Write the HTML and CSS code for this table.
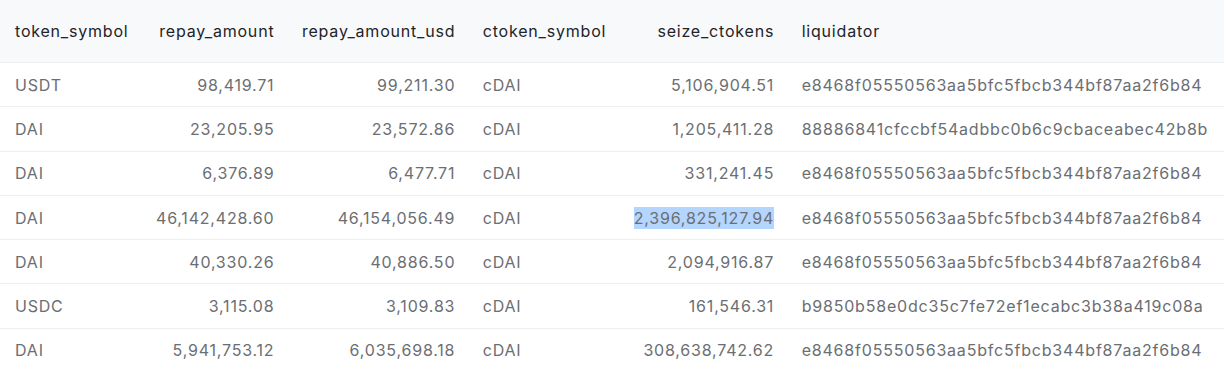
FILE: index.html
```html
<!DOCTYPE html>
<html>
<head>
<meta charset="utf-8">
<link rel="stylesheet" href="styles.css">
</head>
<body>
<table class="grid">
  <thead>
    <tr>
      <th class="l">token_symbol</th>
      <th class="r">repay_amount</th>
      <th class="r">repay_amount_usd</th>
      <th class="l">ctoken_symbol</th>
      <th class="r">seize_ctokens</th>
      <th class="l last">liquidator</th>
    </tr>
  </thead>
  <tbody>
    <tr><td class="l">USDT</td><td class="r">98,419.71</td><td class="r">99,211.30</td><td class="l">cDAI</td><td class="r">5,106,904.51</td><td class="l">e8468f05550563aa5bfc5fbcb344bf87aa2f6b84</td></tr>
    <tr><td class="l">DAI</td><td class="r">23,205.95</td><td class="r">23,572.86</td><td class="l">cDAI</td><td class="r">1,205,411.28</td><td class="l">88886841cfccbf54adbbc0b6c9cbaceabec42b8b</td></tr>
    <tr><td class="l">DAI</td><td class="r">6,376.89</td><td class="r">6,477.71</td><td class="l">cDAI</td><td class="r">331,241.45</td><td class="l">e8468f05550563aa5bfc5fbcb344bf87aa2f6b84</td></tr>
    <tr><td class="l">DAI</td><td class="r">46,142,428.60</td><td class="r">46,154,056.49</td><td class="l">cDAI</td><td class="r"><span class="sel">2,396,825,127.94</span></td><td class="l">e8468f05550563aa5bfc5fbcb344bf87aa2f6b84</td></tr>
    <tr><td class="l">DAI</td><td class="r">40,330.26</td><td class="r">40,886.50</td><td class="l">cDAI</td><td class="r">2,094,916.87</td><td class="l">e8468f05550563aa5bfc5fbcb344bf87aa2f6b84</td></tr>
    <tr><td class="l">USDC</td><td class="r">3,115.08</td><td class="r">3,109.83</td><td class="l">cDAI</td><td class="r">161,546.31</td><td class="l">b9850b58e0dc35c7fe72ef1ecabc3b38a419c08a</td></tr>
    <tr><td class="l">DAI</td><td class="r">5,941,753.12</td><td class="r">6,035,698.18</td><td class="l">cDAI</td><td class="r">308,638,742.62</td><td class="l">e8468f05550563aa5bfc5fbcb344bf87aa2f6b84</td></tr>
  </tbody>
</table>
</body>
</html>
```

FILE: styles.css
```css
html, body {
  margin: 0;
  padding: 0;
  background: #ffffff;
}
body {
  font-family: Inter, "Noto Sans", sans-serif;
  font-size: 16px;
  letter-spacing: 0.8px;
}
.grid {
  width: 100%;
  border-collapse: collapse;
}
.grid th {
  background: #f8f9fb;
  color: #222428;
  font-weight: 400;
  height: 62px;
  padding: 0 13.75px;
  white-space: nowrap;
  border-bottom: 1px solid #eceef0;
}
.grid td {
  color: #6b6e72;
  height: 43.3px;
  padding: 0 13.75px;
  white-space: nowrap;
  border-bottom: 1px solid #eceef0;
}
.grid tbody tr:last-child td {
  border-bottom: none;
}
.grid th:first-child, .grid td:first-child {
  padding-left: 15px;
}
.grid .last {
  width: 100%;
}
.l { text-align: left; }
.r { text-align: right; }
.sel {
  background: #b4d5fe;
  display: inline-block;
  line-height: 22px;
}
```
